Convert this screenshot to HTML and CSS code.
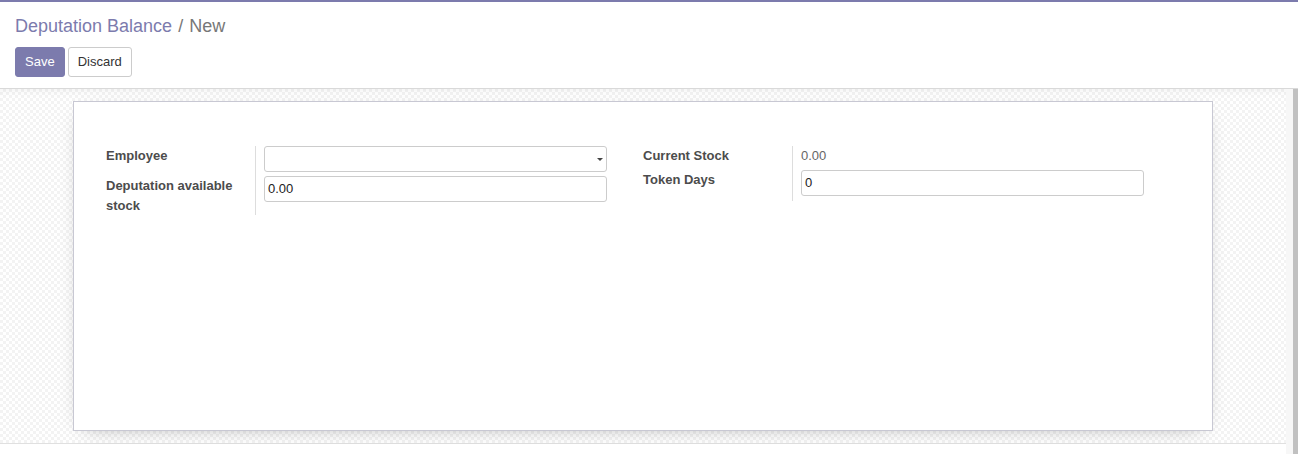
FILE: index.html
```html
<!DOCTYPE html>
<html>
<head>
<meta charset="utf-8">
<link rel="stylesheet" href="styles.css">
</head>
<body>
<div class="app">
  <div class="control-panel">
    <div class="breadcrumb"><span class="crumb-link">Deputation Balance</span><span class="sep">/</span><span class="crumb-active">New</span></div>
    <div class="buttons">
      <button class="btn btn-primary">Save</button>
      <button class="btn btn-default">Discard</button>
    </div>
  </div>
  <div class="content">
    <div class="scroll-area">
      <div class="sheet-bg">
        <div class="sheet">
          <div class="groups">
            <div class="group">
              <div class="row row-left1">
                <div class="label">Employee</div>
                <div class="field">
                  <div class="input select"><span class="caret"></span></div>
                </div>
              </div>
              <div class="row row-left2">
                <div class="label">Deputation available stock</div>
                <div class="field">
                  <div class="input">0.00</div>
                </div>
              </div>
            </div>
            <div class="group">
              <div class="row row-right1">
                <div class="label">Current Stock</div>
                <div class="field value">0.00</div>
              </div>
              <div class="row row-right2">
                <div class="label">Token Days</div>
                <div class="field">
                  <div class="input">0</div>
                </div>
              </div>
            </div>
          </div>
        </div>
      </div>
      <div class="after"></div>
    </div>
    <div class="scrollbar"><div class="thumb"></div></div>
  </div>
</div>
</body>
</html>
```

FILE: styles.css
```css
* { box-sizing: border-box; }
html, body { margin: 0; padding: 0; }
body {
  font-family: "Liberation Sans", Arial, sans-serif;
  font-size: 13px;
  color: #4c4c4c;
  background: #fff;
  width: 1298px;
  height: 454px;
  overflow: hidden;
}
.app {
  border-top: 2px solid #7c7bad;
  height: 454px;
  display: flex;
  flex-direction: column;
}
.control-panel {
  padding: 9px 15px 11px 15px;
  border-bottom: 1px solid #d9d9d9;
  background: #fff;
}
.breadcrumb {
  font-size: 18px;
  line-height: 30px;
  height: 30px;
}
.crumb-link { color: #7c7bad; }
.sep { color: #777; margin: 0 6px; }
.crumb-active { color: #777; }
.buttons {
  margin-top: 6px;
  display: flex;
  gap: 3px;
}
.btn {
  font-family: "Liberation Sans", Arial, sans-serif;
  font-size: 13px;
  height: 30px;
  padding: 0 9px;
  border-radius: 3px;
  border: 1px solid #ccc;
  line-height: 28px;
}
.btn-primary {
  background: #7c7bad;
  border-color: #7c7bad;
  color: #fff;
}
.btn-default {
  background: #fff;
  color: #333;
}
.content {
  flex: 1;
  display: flex;
  min-height: 0;
}
.scroll-area {
  flex: 1;
  display: flex;
  flex-direction: column;
}
.sheet-bg {
  padding: 12px 0;
  border-bottom: 1px solid #e0e0e0;
  background-color: #fff;
  background-image: repeating-conic-gradient(#f3f3f3 0 25%, #ffffff 0 50%);
  background-size: 6px 6px;
  box-shadow: inset 0 8px 8px -6px rgba(0,0,0,0.05);
}
.sheet {
  width: 1140px;
  min-height: 330px;
  margin: 0 auto;
  background: #fff;
  border: 1px solid #c8c8d3;
  box-shadow: 0 5px 20px -12px rgba(0,0,0,0.45);
  padding: 44px 32px 20px 32px;
}
.groups {
  display: grid;
  grid-template-columns: 537px 537px;
}
.group {
  padding-right: 36px;
  display: grid;
  grid-template-columns: 150px 1fr;
  align-content: start;
}
.row { display: contents; }
.label {
  font-weight: bold;
  line-height: 20px;
  color: #4c4c4c;
  padding-right: 8px;
  border-right: 1px solid #ddd;
}
.row-left1 .label, .row-left1 .field { height: 30px; }
.row-left2 .label { height: 39px; }
.row-right1 .label, .row-right1 .field { height: 24px; }
.row-right2 .label, .row-right2 .field { height: 31px; }
.field {
  padding-left: 8px;
}
.value {
  line-height: 19px;
  color: #666;
}
.input {
  height: 26px;
  border: 1px solid #ccc;
  border-radius: 3px;
  padding: 0 3px;
  line-height: 24px;
  font-size: 13px;
  color: #222;
  position: relative;
}
.select .caret {
  position: absolute;
  right: 3px;
  top: 11px;
  width: 0;
  height: 0;
  border-left: 3px solid transparent;
  border-right: 3px solid transparent;
  border-top: 3px solid #444;
}
.after { flex: 1; background: #fff; }
.scrollbar {
  width: 12px;
  flex: 0 0 12px;
  background: #f7f7f7;
  display: flex;
  justify-content: flex-end;
}
.thumb {
  width: 5px;
  background: #c1c1c1;
}
```
